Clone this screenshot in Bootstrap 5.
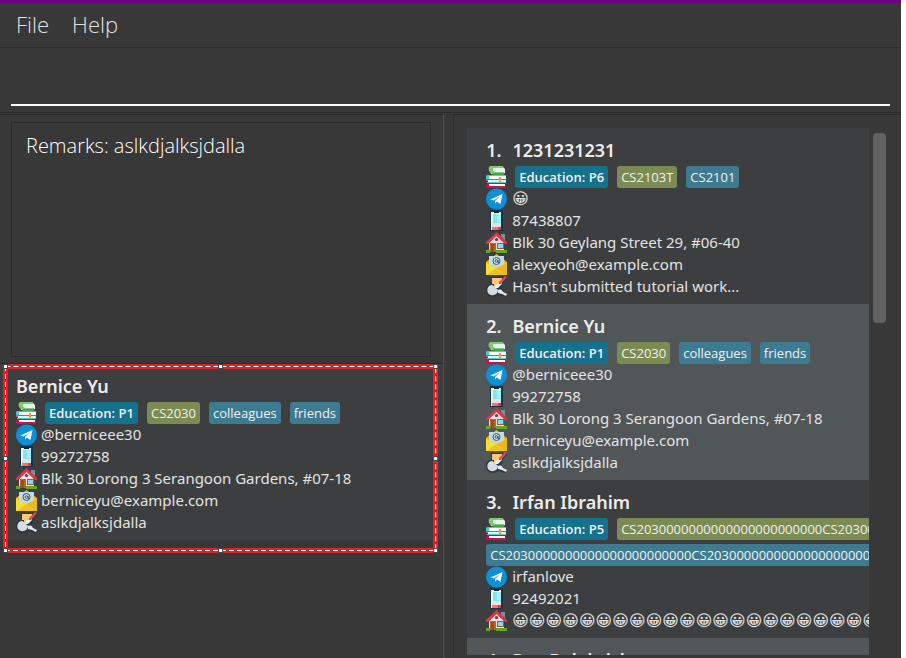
<!DOCTYPE html>
<html lang="en">
<head>
<meta charset="utf-8">
<meta name="viewport" content="width=device-width, initial-scale=1">
<title>Address Book</title>
<link href="https://cdn.jsdelivr.net/npm/bootstrap@5.3.0/dist/css/bootstrap.min.css" rel="stylesheet">
<style>
  body { font-family: "Noto Sans", "Open Sans", "DejaVu Sans", sans-serif; font-size: 15px; line-height: 22px; color: #e3e3e3; background: #fff; padding-right: 5px; }
  .app { background: #383838; border-top: 3px solid #6a0080; }
  .menubar { height: 45px; padding: 0 16px 2px; gap: 23px; border-bottom: 1px solid #2b2b2b; font-family: "Open Sans", sans-serif; font-size: 22px; font-weight: 300; }
  .menubar a { color: #e3e3e3; }
  .command-pane { height: 65px; padding: 10px 11px 6px; border-bottom: 1px solid #2b2b2b; }
  .command-box { background: transparent; border: 0; border-bottom: 2px solid #fff; color: #fff; outline: 0; }
  .split { padding-top: 1px; }
  .left-pane { flex: 0 0 49.3%; border-top: 1px solid #2b2b2b; border-right: 1px solid #505050; }
  .right-pane { margin-left: 9px; padding: 13px 13px 3px; border-top: 1px solid #2b2b2b; border-left: 1px solid #2b2b2b; }
  .remarks-wrap { padding: 7px 12px 6px 11px; border-bottom: 1px solid #2b2b2b; }
  .remarks { height: 235px; padding: 8px 14px; background: transparent; border: 1px solid #2b2b2b; color: #fff; font-family: "Open Sans", sans-serif; font-size: 20px; line-height: 30px; font-weight: 300; resize: none; outline: 0; }
  .person { padding: 10px 0 6px 19px; background: #3c3e3f; white-space: nowrap; }
  .person.alt { background: #515658; }
  .detail { padding-left: 16px; height: 176px; }
  .person-name { height: 24px; line-height: 24px; font-size: 18px; font-weight: 600; margin: 0 0 4px; gap: 11px; color: #ececec; }
  .tags { column-gap: 9px; }
  .tags .ico { margin-right: -2px; }
  .chip { height: 22px; padding: 0 4px; border-radius: 3px; background: #3e7b91; color: #f0f0f0; font-family: "Open Sans", sans-serif; font-size: 13px; font-weight: 500; }
  .chip.edu { background: #16718c; font-weight: 600; }
  .chip.course { background: #7b8b53; }
  .line { height: 22px; line-height: 20px; gap: 4px; }
  .detail .line { gap: 3px; }
  .ico { width: 22px; height: 22px; flex: none; }
  .emoji { font-family: "DejaVu Sans", sans-serif; font-size: 16px; line-height: 22px; }
  .list { overflow: hidden; }
  .scroll-track { width: 19px; padding: 5px 2px 0 4px; }
  .scroll-thumb { height: 190px; border-radius: 4px; background: #616161; }
  .marquee { inset: 0 5px -13px 3px; border: 5px solid #ed1c24; }
  .marquee svg { left: -3px; top: -3px; width: calc(100% + 5px); height: calc(100% + 5px); overflow: visible; }
</style>
<script src="https://cdn.jsdelivr.net/npm/bootstrap@5.3.0/dist/js/bootstrap.bundle.min.js"></script>
</head>
<body>
<svg class="d-none" aria-hidden="true">
  <symbol id="i-books" viewBox="0 0 22 22">
    <path d="M4 1h13l2 2v4l-2 1H5z" fill="#eeecf4"/><path d="M4 0h13v2H8C6 3 7 5 9 6h9v2H8C3 8 1 2 4 0z" fill="#7fcb6a"/><path d="M7 7h11v2H6z" fill="#3da263"/>
    <path d="M1 9h19v1H3v3h17v1H2c-3 0-3-4-1-5z" fill="#42cdc7"/><path d="M3 10h17v3H3z" fill="#fff"/><path d="M0 13h20v1H2v1H0z" fill="#ef4560"/>
    <path d="M2 14h18v3H2z" fill="#d9f5f5"/><path d="M1 16h19v1H1z" fill="#42cdc7"/><path d="M2 17h18v1H3v2h17v2H2c-3 0-3-4 0-5z" fill="#c90f58"/><path d="M3 18h16v2H3z" fill="#fff"/><path d="M13 11h2v6l-1-1-1 1z" fill="#ff9d2e"/>
  </symbol>
  <symbol id="i-telegram" viewBox="0 0 22 22">
    <circle cx="10.5" cy="11" r="10.5" fill="#0c90d8"/><path d="M4.500 11.500 16.500 6 14.500 16l-3.600-2.400L9 15.500V13l5-4.800-6.300 4.200z" fill="#fff"/>
  </symbol>
  <symbol id="i-phone" viewBox="0 0 22 22">
    <rect x="4" y="0" width="13" height="21" rx="1" fill="#123646"/><path d="M5 2h10v18H5z" fill="#f2f2f2"/><path d="M8 1h5v2H8z" fill="#07232e"/><path d="M7 4h8v9H7z" fill="#7fe5ee"/><path d="M11 4h4v8h-4z" fill="#a8eff3"/><path d="M6 13h9v4H6z" fill="#dfe3e6"/><path d="M6 17h9v3H6z" fill="#ff705c"/><path d="M12 17h3v3h-3z" fill="#e2384a"/>
  </symbol>
  <symbol id="i-house" viewBox="0 0 22 22">
    <path d="M15 2h4v9h-4z" fill="#78909c"/><path d="M3 11 10.500 3 18 11v9H3z" fill="#e6dfe6"/><path d="M0 10 10.500 0 21 10v2h-2l-8.500-8L2 12H0z" fill="#d93647"/><circle cx="10.500" cy="7.500" r="1.600" fill="#a92036"/><path d="M4 11h6v9H4z" fill="#bc651f"/><path d="M5 12h3v8H5z" fill="#95501c"/><path d="M11 11h7v6h-7z" fill="#a85a22"/><path d="M12 12h5v4h-5z" fill="#8bd8ee"/><path d="M0 18h4v3H0zM10 18h11v3H10z" fill="#61aa27"/>
  </symbol>
  <symbol id="i-mail" viewBox="0 0 22 22">
    <path d="M0 8 10.500 0 21 8v12H0z" fill="#f5b91c"/><path d="M3 2h15v10l-7.500 4L3 12z" fill="#c0dbe5"/><circle cx="10.500" cy="7" r="3.500" fill="none" stroke="#455a64" stroke-width="1"/><circle cx="10.500" cy="7" r="1.300" fill="none" stroke="#455a64"/><path d="M12 6v2.500h1.500" stroke="#455a64" fill="none"/><path d="M0 9l10 5 11-5v12H0z" fill="#efc51d"/><path d="M0 9l10 5-9 7H0z" fill="#f6df37"/><path d="M21 9l-10 5 9 7h1z" fill="#eeb81c"/>
  </symbol>
  <symbol id="i-note" viewBox="0 0 22 22">
    <path d="M5 1h11l4-1 1 2-4 5v3l-3 4 4 2 3 3-2 2-4-1-3-1c-5 4-12 1-12-5 0-4 2-6 5-6z" fill="#24394a"/>
    <path d="M6 9c-5 0-6 7-3 9 4 3 9 0 9-4l-4-4z" fill="#d9dce0"/><path d="M6 2h10v6l-4 1-4 3V8H6z" fill="#ffc578"/><path d="M10 8h6l-4 4H9z" fill="#f4f2f1"/><path d="M13 6l6-6 2 1-6 7h-2z" fill="#e44b3d"/><path d="M12 14c3-1 4 0 5 2l4 2-1 2-4-2-4-1z" fill="#e8e8ea"/>
  </symbol>
</svg>

<div class="app vh-100 d-flex flex-column overflow-hidden">
  <nav class="menubar d-flex align-items-center flex-shrink-0">
    <a class="text-decoration-none" href="#">File</a>
    <a class="text-decoration-none" href="#">Help</a>
  </nav>
  <div class="command-pane flex-shrink-0"><input class="command-box w-100 h-100" type="text" aria-label="Command"></div>

  <div class="split d-flex flex-grow-1 overflow-hidden">
    <section class="left-pane">
      <div class="remarks-wrap"><textarea class="remarks d-block w-100" aria-label="Remarks" spellcheck="false">Remarks: aslkdjalksjdalla</textarea></div>
      <div class="position-relative">
        <article class="person detail">
          <h2 class="person-name">Bernice Yu</h2>
          <div class="tags d-flex"><svg class="ico"><use href="#i-books"/></svg><span class="chip edu">Education: P1</span><span class="chip course">CS2030</span><span class="chip">colleagues</span><span class="chip">friends</span></div>
          <div class="line d-flex"><svg class="ico"><use href="#i-telegram"/></svg><span>@berniceee30</span></div>
          <div class="line d-flex"><svg class="ico"><use href="#i-phone"/></svg><span>99272758</span></div>
          <div class="line d-flex"><svg class="ico"><use href="#i-house"/></svg><span>Blk 30 Lorong 3 Serangoon Gardens, #07-18</span></div>
          <div class="line d-flex"><svg class="ico"><use href="#i-mail"/></svg><span>berniceyu@example.com</span></div>
          <div class="line d-flex"><svg class="ico"><use href="#i-note"/></svg><span>aslkdjalksjdalla</span></div>
        </article>
        <div class="marquee position-absolute">
          <svg class="position-absolute" aria-hidden="true">
            <rect x=".5" y=".5" width="100%" height="100%" fill="none" stroke="#4a4a4a"/>
            <rect x=".5" y=".5" width="100%" height="100%" fill="none" stroke="#fff" stroke-dasharray="5 3"/>
            <svg overflow="visible"><rect id="grip" x="-1.5" y="-1.5" width="4" height="4" fill="#fff" stroke="#444"/></svg>
            <svg overflow="visible" x="50%"><use href="#grip"/></svg>
            <svg overflow="visible" x="100%"><use href="#grip"/></svg>
            <svg overflow="visible" y="50%"><use href="#grip"/></svg>
            <svg overflow="visible" x="100%" y="50%"><use href="#grip"/></svg>
            <svg overflow="visible" y="100%"><use href="#grip"/></svg>
            <svg overflow="visible" x="50%" y="100%"><use href="#grip"/></svg>
            <svg overflow="visible" x="100%" y="100%"><use href="#grip"/></svg>
          </svg>
        </div>
      </div>
    </section>

    <section class="right-pane d-flex flex-grow-1 overflow-hidden">
      <div class="list flex-grow-1">
        <article class="person">
          <h2 class="person-name d-flex"><span>1.</span><span>1231231231</span></h2>
          <div class="tags d-flex"><svg class="ico"><use href="#i-books"/></svg><span class="chip edu">Education: P6</span><span class="chip course">CS2103T</span><span class="chip">CS2101</span></div>
          <div class="line d-flex"><svg class="ico"><use href="#i-telegram"/></svg><span class="emoji">😀&#xFE0E;</span></div>
          <div class="line d-flex"><svg class="ico"><use href="#i-phone"/></svg><span>87438807</span></div>
          <div class="line d-flex"><svg class="ico"><use href="#i-house"/></svg><span>Blk 30 Geylang Street 29, #06-40</span></div>
          <div class="line d-flex"><svg class="ico"><use href="#i-mail"/></svg><span>alexyeoh@example.com</span></div>
          <div class="line d-flex"><svg class="ico"><use href="#i-note"/></svg><span>Hasn't submitted tutorial work...</span></div>
        </article>
        <article class="person alt">
          <h2 class="person-name d-flex"><span>2.</span><span>Bernice Yu</span></h2>
          <div class="tags d-flex"><svg class="ico"><use href="#i-books"/></svg><span class="chip edu">Education: P1</span><span class="chip course">CS2030</span><span class="chip">colleagues</span><span class="chip">friends</span></div>
          <div class="line d-flex"><svg class="ico"><use href="#i-telegram"/></svg><span>@berniceee30</span></div>
          <div class="line d-flex"><svg class="ico"><use href="#i-phone"/></svg><span>99272758</span></div>
          <div class="line d-flex"><svg class="ico"><use href="#i-house"/></svg><span>Blk 30 Lorong 3 Serangoon Gardens, #07-18</span></div>
          <div class="line d-flex"><svg class="ico"><use href="#i-mail"/></svg><span>berniceyu@example.com</span></div>
          <div class="line d-flex"><svg class="ico"><use href="#i-note"/></svg><span>aslkdjalksjdalla</span></div>
        </article>
        <article class="person">
          <h2 class="person-name d-flex"><span>3.</span><span>Irfan Ibrahim</span></h2>
          <div class="tags d-flex"><svg class="ico"><use href="#i-books"/></svg><span class="chip edu">Education: P5</span><span class="chip course">CS2030000000000000000000000CS2030000000000000</span></div>
          <div class="tags d-flex mt-1"><span class="chip">CS2030000000000000000000000CS2030000000000000000000000000</span></div>
          <div class="line d-flex"><svg class="ico"><use href="#i-telegram"/></svg><span>irfanlove</span></div>
          <div class="line d-flex"><svg class="ico"><use href="#i-phone"/></svg><span>92492021</span></div>
          <div class="line d-flex"><svg class="ico"><use href="#i-house"/></svg><span class="emoji">😀😀😀😀😀😀😀😀😀😀😀😀😀😀😀😀😀😀😀😀😀😀</span></div>
        </article>
        <article class="person alt">
          <h2 class="person-name d-flex"><span>4.</span><span>Roy Balakrishnan</span></h2>
        </article>
      </div>
      <div class="scroll-track flex-shrink-0"><div class="scroll-thumb"></div></div>
    </section>
  </div>
</div>
</body>
</html>
